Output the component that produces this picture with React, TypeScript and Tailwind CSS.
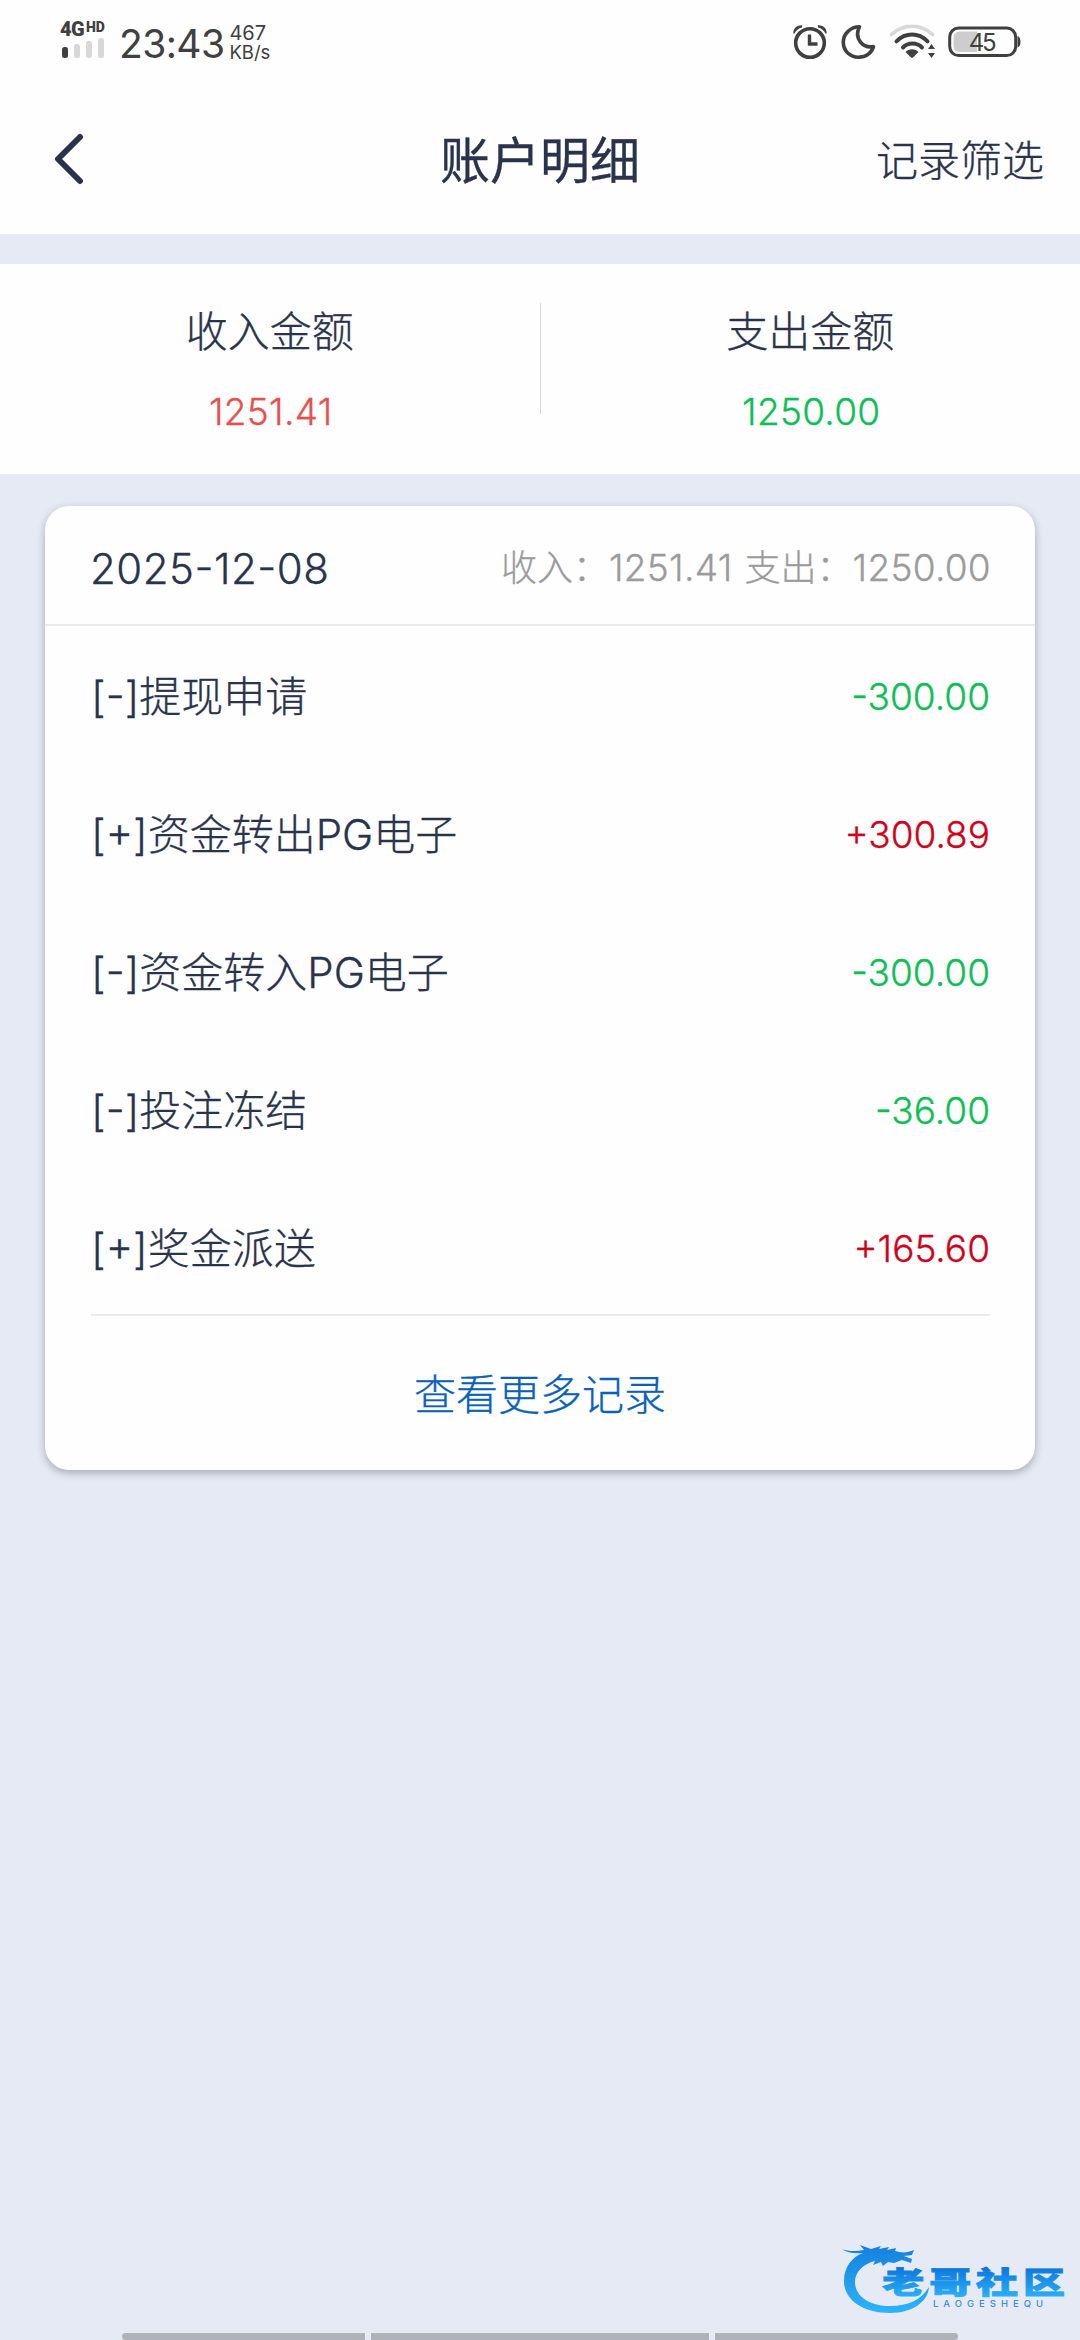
import clsx from "clsx";

type AccountRecord = {
  sign: "+" | "-";
  label: string;
  amount: string;
};

const records: AccountRecord[] = [
  { sign: "-", label: "提现申请", amount: "300.00" },
  { sign: "+", label: "资金转出PG电子", amount: "300.89" },
  { sign: "-", label: "资金转入PG电子", amount: "300.00" },
  { sign: "-", label: "投注冻结", amount: "36.00" },
  { sign: "+", label: "奖金派送", amount: "165.60" },
];

function SignalIcon() {
  return (
    <svg width="48" height="20" viewBox="0 0 48 20" className="block">
      <rect x="2" y="9" width="6" height="11" rx="2.5" fill="#404040" />
      <rect x="14" y="6" width="6" height="14" rx="2.5" fill="#d8d8d8" />
      <rect x="26" y="3" width="6" height="17" rx="2.5" fill="#d8d8d8" />
      <rect x="38" y="0" width="6" height="20" rx="2.5" fill="#d8d8d8" />
    </svg>
  );
}

function AlarmIcon() {
  return (
    <svg width="36" height="36" viewBox="0 0 36 36" fill="none" stroke="#404040">
      <circle cx="18" cy="19" r="14.3" strokeWidth="3.6" />
      <path d="M17.5 10.5v9.5h8" strokeWidth="3.4" />
      <path d="M1.3 9.5C1.3 4 5 1 10.2 1.3L10 3.6C6.5 4.4 4 6.5 2.6 9.6z" fill="#404040" stroke="none" />
      <path d="M34.7 9.5C34.7 4 31 1 25.8 1.3L26 3.6C29.5 4.4 32 6.5 33.4 9.6z" fill="#404040" stroke="none" />
    </svg>
  );
}

function MoonIcon() {
  return (
    <svg width="36" height="36" viewBox="0 0 36 36" fill="none">
      <path
        d="M18.5 2.8C9.5 3 2.3 9.5 2.3 18.3C2.3 27 9.2 33.2 17.5 33.2C25 33.2 30.5 29 32.5 22.6C22 24.5 12.5 14.5 18.5 2.8Z"
        stroke="#404040"
        strokeWidth="3.6"
        strokeLinejoin="round"
      />
    </svg>
  );
}

function WifiIcon() {
  return (
    <svg width="48" height="36" viewBox="0 0 48 36" fill="none" strokeLinecap="round">
      <path d="M2.5 10.5C14 -0.5 32 -0.5 43.5 10.5" stroke="#d8d8d8" strokeWidth="3.6" />
      <path d="M7.5 17.3C16.5 8.3 29.5 8.3 38.5 17.3" stroke="#404040" strokeWidth="4" />
      <path d="M14 23.5C19 18.3 28 18.3 33 23.5" stroke="#404040" strokeWidth="4" />
      <path d="M16.5 28C20 24.3 26 24.3 29.5 28L24 33.6Q23 34.4 22 33.6z" fill="#404040" />
      <path d="M42.5 20l3.5 5h-7zM42.5 34l3.5-5h-7z" fill="#404040" />
    </svg>
  );
}

function BatteryIcon() {
  return (
    <svg width="74" height="32" viewBox="0 0 74 32">
      <rect x="1.7" y="2" width="66" height="27.6" rx="9" fill="none" stroke="#404040" strokeWidth="3" />
      <path d="M12 5.5H29V26H12Q5.5 26 5.5 19.5V12Q5.5 5.5 12 5.5z" fill="#cdcdcd" />
      <path d="M69.5 10Q72.5 11 72.5 15.8T69.5 21.6z" fill="#404040" />
      <text x="34.7" y="25" textAnchor="middle" fontSize="24" fontFamily="Inter, sans-serif" textLength="28" fill="#404040">
        45
      </text>
    </svg>
  );
}

function StatusBar() {
  return (
    <div className="flex h-[84px] items-start justify-between pl-[60px] pr-[58px] text-[#404040]">
      <div className="flex items-start">
        <div className="w-[50px] pt-[20px]">
          <div className="flex h-[18px] items-start gap-[2px] font-[Roboto,sans-serif] font-black">
            <span className="w-[24px] text-[20px] leading-[19px] tracking-[-0.5px]">4G</span>
            <span className="text-[14px] leading-[14px]">HD</span>
          </div>
          <SignalIcon />
        </div>
        <span className="ml-[9px] pt-[21px] text-[39px] leading-[46px] tracking-[-0.6px]">23:43</span>
        <div className="ml-[5px] pt-[24px] text-[20px] leading-[19px]">
          <p>467</p>
          <p className="text-[18.5px]">KB/s</p>
        </div>
      </div>
      <div className="flex items-start pt-[24px]">
        <AlarmIcon />
        <div className="ml-[13px]"><MoonIcon /></div>
        <div className="ml-[12px]"><WifiIcon /></div>
        <div className="ml-[11px] pt-[2px]"><BatteryIcon /></div>
      </div>
    </div>
  );
}

function Header() {
  return (
    <div className="grid h-[150px] grid-cols-3 items-center pl-[52px] pr-[36px]">
      <svg width="34" height="52" viewBox="0 0 34 52" fill="none">
        <path d="M28 4L6 26L28 48" stroke="#29334b" strokeWidth="6" strokeLinecap="round" strokeLinejoin="round" />
      </svg>
      <h1 className="-ml-4 pt-1 text-center text-[50px] leading-none font-normal">账户明细</h1>
      <span className="pt-1 text-right text-[42px] leading-none">记录筛选</span>
    </div>
  );
}

function SummaryItem({ title, value, color }: { title: string; value: string; color: string }) {
  return (
    <div className="flex flex-1 flex-col items-center pt-[38px]">
      <span className="text-[42px] leading-[60px]">{title}</span>
      <span className={clsx("mt-[27px] pl-0.5 text-[37px] leading-[46px] tracking-[0.3px]", color)}>{value}</span>
    </div>
  );
}

function RecordCard() {
  return (
    <div className="mx-[45px] mt-[32px] flex h-[964px] flex-col rounded-[24px] bg-[#fefefe] shadow-[0_3px_8px_rgba(0,0,0,0.28)]">
      <div className="flex h-[120px] items-center justify-between border-b-2 border-[#ebebeb] pt-1.5 pr-[44px] pl-[45px]">
        <span className="text-[42px] tracking-[0.5px] [font-feature-settings:'case']">2025-12-08</span>
        <div className="flex items-center text-[36px] text-[#9b9b9b]">
          <span>收入：</span>
          <span className="text-[37px] tracking-[0.3px]">1251.41</span>
          <span className="ml-[12px]">支出：</span>
          <span className="text-[37px] tracking-[0.3px]">1250.00</span>
        </div>
      </div>
      <div className="ml-[46px] mr-[45px] h-[690px] border-b-2 border-[#ebebeb]">
        {records.map((item, index) => (
          <div key={index} className="flex h-[138px] items-center justify-between pt-0.5">
            <span className="text-[42px]">
              [<span className="[font-feature-settings:'case']">{item.sign}</span>]{item.label}
            </span>
            <span
              className={clsx(
                "pt-0.5 text-[37px] [font-feature-settings:'case']",
                item.sign === "+" ? "text-[#d0021b]" : "text-[#0dbf55]"
              )}
            >
              {item.sign}
              {item.amount}
            </span>
          </div>
        ))}
      </div>
      <button className="flex-1 pt-0.5 text-[42px] text-[#0a62b8]">查看更多记录</button>
    </div>
  );
}

function CommunityLogo() {
  return (
    <svg className="absolute right-0 bottom-0" width="260" height="120" viewBox="0 0 260 120">
      <defs>
        <linearGradient id="logoRing" x1="0" y1="25" x2="0" y2="93" gradientUnits="userSpaceOnUse">
          <stop offset="0" stopColor="#1580dd" />
          <stop offset="1" stopColor="#2cb4fa" />
        </linearGradient>
        <linearGradient id="logoText" x1="0" y1="47" x2="0" y2="76" gradientUnits="userSpaceOnUse">
          <stop offset="0" stopColor="#0b76dc" />
          <stop offset="1" stopColor="#27aef8" />
        </linearGradient>
      </defs>
      <path
        d="M22 29C29 32 38 31 44 30L40 25L51 29L61 26L59 29L69 27L67 30L76 28L75 31C82 33 87 33 94 30L92 35L84 36L92 39L91 43L82 40L74 43L68 42L63 46L61 42L53 45L55 41C43 44 35 52 35 62C35 76 49 86 70 86C88 86 101 80 109 67C108 82 92 93 70 93C43 93 24 80 24 61C24 47 32 37 43 33C35 34 27 33 22 29Z"
        fill="url(#logoRing)"
      />
      <text
        transform="scale(1.4 1)"
        x="44.5"
        y="73"
        fontSize="30"
        letterSpacing="3.5"
        fontFamily="'Noto Sans CJK SC', sans-serif"
        fontWeight="900"
        fill="url(#logoText)"
        stroke="url(#logoText)"
        strokeWidth="0.9"
      >
        老哥社区
      </text>
      <text x="113" y="86.5" fontSize="9.5" textLength="110" fontFamily="Inter, sans-serif" fontWeight="500" fill="#3d8fcf">
        LAOGESHEQU
      </text>
    </svg>
  );
}

function App() {
  return (
    <div className="relative flex h-[2340px] w-[1080px] flex-col overflow-hidden bg-[#e6eaf5] font-[Inter,'Noto_Sans_CJK_SC',sans-serif] font-light text-[#29334b]">
      <div className="bg-[#fefefe]">
        <div className="font-normal">
          <StatusBar />
        </div>
        <div className="[-webkit-text-stroke-width:0.3px]">
          <Header />
        </div>
      </div>
      <div className="mt-[30px] flex h-[210px] bg-[#fefefe] [-webkit-text-stroke-width:0.3px]">
        <SummaryItem title="收入金额" value="1251.41" color="text-[#e8504f]" />
        <div className="mt-[39px] h-[111px] w-px bg-[#d8d8d8]" />
        <SummaryItem title="支出金额" value="1250.00" color="text-[#0dbf55]" />
      </div>
      <div className="[-webkit-text-stroke-width:0.3px]">
        <RecordCard />
      </div>
      <div className="mt-auto flex h-[7px] justify-center gap-[6px]">
        <div className="w-[243px] rounded-l-[4px] bg-[#b0b2b9]" />
        <div className="w-[338px] bg-[#b0b2b9]" />
        <div className="w-[243px] rounded-r-[4px] bg-[#b0b2b9]" />
      </div>
      <CommunityLogo />
    </div>
  );
}

export default App;
